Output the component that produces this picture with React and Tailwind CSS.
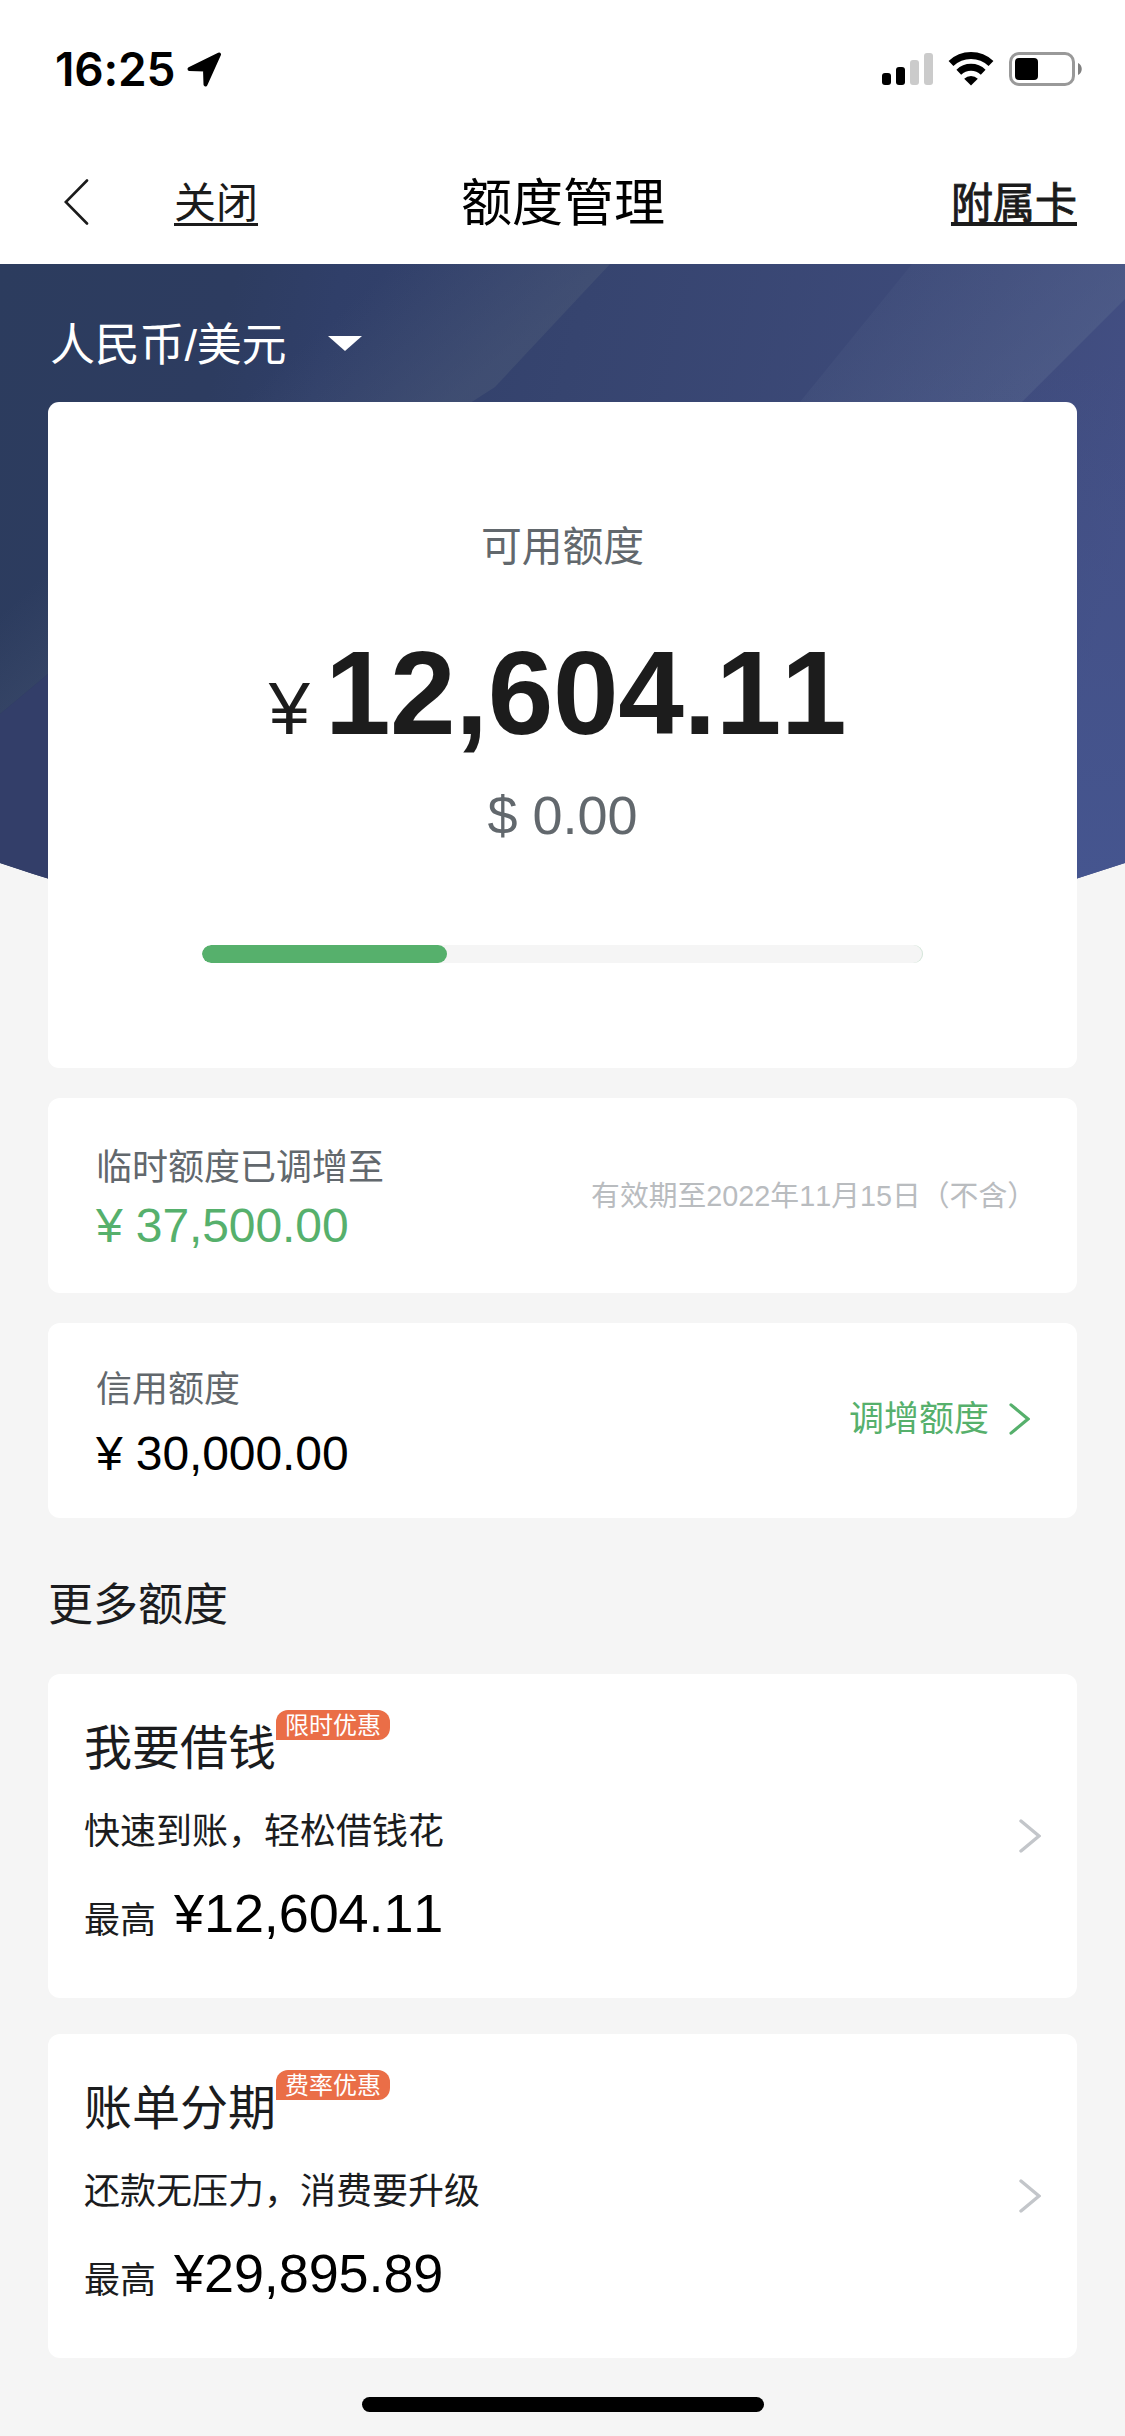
const OFFERS = [
  {
    title: '我要借钱',
    badge: '限时优惠',
    desc: '快速到账，轻松借钱花',
    amount: '¥12,604.11',
  },
  {
    title: '账单分期',
    badge: '费率优惠',
    desc: '还款无压力，消费要升级',
    amount: '¥29,895.89',
  },
]

const USED_PERCENT = 34

function Chevron({ className }) {
  return (
    <svg className={className} viewBox="0 0 22 34" fill="none" stroke="currentColor" strokeWidth="3.4" strokeLinecap="round">
      <path d="M2 2 L20 17 L2 32" />
    </svg>
  )
}

function StatusBar() {
  return (
    <div className="flex h-[140px] items-start justify-between pl-[55px] pr-[43px] pt-[46px]">
      <div className="flex items-center">
        <span className="w-[120px] whitespace-nowrap font-[Inter,sans-serif] text-[46px] font-semibold leading-[46px] tracking-[-0.2px] text-black">16:25</span>
        <svg className="ml-[12px] h-[35px] w-[35px]" viewBox="0 0 35 35">
          <path
            d="M2.5 17 L32 2.5 L18.5 32.5 L18 17.5 Z"
            fill="#000"
            stroke="#000"
            strokeWidth="4"
            strokeLinejoin="round"
          />
        </svg>
      </div>
      <div className="flex h-[46px] items-center">
        {/* Signal */}
        <div className="flex h-[32px] items-end gap-[5px]">
          <span className="h-[12px] w-[9px] rounded-[3px] bg-black" />
          <span className="h-[18px] w-[9px] rounded-[3px] bg-black" />
          <span className="h-[25px] w-[9px] rounded-[3px] bg-[#cbcbcb]" />
          <span className="h-[32px] w-[9px] rounded-[3px] bg-[#cbcbcb]" />
        </div>
        {/* Wi-Fi */}
        <svg className="ml-[15px] h-[34px] w-[46px]" viewBox="0 0 46 34">
          <path d="M3 11.5 A29 29 0 0 1 43 11.5" fill="none" stroke="#000" strokeWidth="7" />
          <path d="M10.8 20.2 A17.5 17.5 0 0 1 35.2 20.2" fill="none" stroke="#000" strokeWidth="6.8" />
          <path d="M16.2 26.8 A9.8 9.8 0 0 1 29.8 26.8 L23 33.6 Z" fill="#000" />
        </svg>
        {/* Battery */}
        <svg className="ml-[15px] h-[34px] w-[73px]" viewBox="0 0 73 34">
          <rect x="1.5" y="1.5" width="63" height="31" rx="8.5" fill="none" stroke="#999" strokeWidth="3" />
          <rect x="6" y="6" width="23" height="22" rx="4" fill="#000" />
          <path d="M69 11 C74 13 74 21 69 23 Z" fill="#808080" />
        </svg>
      </div>
    </div>
  )
}

function NavBar() {
  return (
    <div className="grid h-[124px] grid-cols-3 items-center pl-16 pr-12 pt-[3px] text-[#1b1b1b]">
      <div className="flex items-center">
        <svg className="-mt-1 h-[46px] w-[25px]" viewBox="0 0 25 46" fill="none" stroke="#1b1b1b" strokeWidth="2.6" strokeLinecap="round">
          <path d="M23 1.5 L1.8 23 L23 44.5" />
        </svg>
        <span className="ml-[85px] text-[42px] leading-[60px] underline decoration-[3px] underline-offset-[5px] [text-decoration-skip-ink:none]">关闭</span>
      </div>
      <h1 className="-ml-[15px] text-center text-[51px] leading-[60px] text-black">额度管理</h1>
      <span className="text-right text-[42px] leading-[60px] underline decoration-[4px] underline-offset-[4px] [-webkit-text-stroke:0.9px_#1b1b1b] [text-decoration-skip-ink:none]">
        附属卡
      </span>
    </div>
  )
}

function HeroBackground() {
  return (
    <svg className="absolute left-0 top-0 h-[700px] w-full" viewBox="0 0 1125 700" preserveAspectRatio="none">
      <defs>
        <linearGradient id="base" gradientUnits="userSpaceOnUse" x1="0" y1="0" x2="1125" y2="260">
          <stop offset="0" stopColor="#2c3c5e" />
          <stop offset="0.2" stopColor="#2d3c60" />
          <stop offset="0.29" stopColor="#303f69" />
          <stop offset="0.5" stopColor="#36446f" />
          <stop offset="0.85" stopColor="#3e4b7b" />
          <stop offset="1" stopColor="#434f84" />
        </linearGradient>
        <linearGradient id="bandLeft" gradientUnits="userSpaceOnUse" x1="220" y1="155" x2="315" y2="262">
          <stop offset="0" stopColor="#4d5b78" stopOpacity="0" />
          <stop offset="1" stopColor="#4d5b78" stopOpacity="0.45" />
        </linearGradient>
        <linearGradient id="bandRight" gradientUnits="userSpaceOnUse" x1="850" y1="60" x2="970" y2="185">
          <stop offset="0" stopColor="#56658c" stopOpacity="0.15" />
          <stop offset="1" stopColor="#56658c" stopOpacity="0.5" />
        </linearGradient>
        <linearGradient id="rightEdge" x1="0" y1="0" x2="0" y2="1">
          <stop offset="0" stopColor="#45558f" stopOpacity="0" />
          <stop offset="1" stopColor="#45558f" />
        </linearGradient>
        <clipPath id="curve">
          <path d="M0 0 H1125 V599 Q562 790 0 599 Z" />
        </clipPath>
      </defs>
      <g clipPath="url(#curve)">
        <rect width="1125" height="700" fill="url(#base)" />
        <path d="M0 0 H610 L495 123 L48 410 L0 450 Z" fill="url(#bandLeft)" />
        <path d="M0 450 L48 410 L200 310 V700 H0 Z" fill="#333e69" />
        <path d="M912 0 H1125 V35 L1022 138 L900 260 L700 260 L800 138 Z" fill="url(#bandRight)" />
        <rect x="900" y="100" width="225" height="520" fill="url(#rightEdge)" />
      </g>
    </svg>
  )
}

function AvailableCard() {
  return (
    <section className="flex h-[666px] flex-col items-center rounded-[11px] bg-white">
      <p className="mt-[115px] text-[40.8px] leading-[60px] text-[#62686d]">可用额度</p>
      <p className="mr-[10px] mt-[56px] flex items-baseline whitespace-nowrap text-[#1c1c1c]">
        <span className="mr-[15px] text-[74px] leading-none">¥</span>
        <span className="text-[118px] font-bold leading-[120px] tracking-[-0.4px] [font-kerning:none]">12,604.11</span>
      </p>
      <p className="mt-[32px] text-[54px] leading-[60px] text-[#62686d]">$ 0.00</p>
      <div className="mt-[100px] h-[18px] w-[721px] overflow-hidden rounded-full bg-[#f5f5f5] shadow-[inset_-1px_0_0_#d5e6da]">
        <div className="h-full rounded-full bg-[#56b06c]" style={{ width: `${USED_PERCENT}%` }} />
      </div>
    </section>
  )
}

function OfferCard({ title, badge, desc, amount }) {
  return (
    <section className="flex h-[324px] items-center justify-between rounded-[12px] bg-white pl-9 pr-[36px]">
      <div className="flex h-full flex-col pt-[45px] text-[#1b1c1e]">
        <div className="flex items-start">
          <h3 className="text-[48px] leading-[60px]">{title}</h3>
          <span className="-mt-[9px] flex h-[30px] w-[114px] items-center justify-center rounded-[12px] rounded-bl-none bg-[#ea6e47] pt-[2px] text-[24px] leading-[28px] text-white">
            {badge}
          </span>
        </div>
        <p className="mt-[28px] text-[36px] leading-[50px]">{desc}</p>
        <p className="mt-[26px] flex items-baseline">
          <span className="relative top-px text-[36px] leading-[50px]">最高</span>
          <span className="ml-[18px] text-[54px] leading-[60px] tracking-[-0.1px] text-black [font-kerning:none]">{amount}</span>
        </p>
      </div>
      <Chevron className="h-[34px] w-[22px] text-[#c3c6ca]" />
    </section>
  )
}

export default function App() {
  return (
    <div className="flex h-[2436px] w-[1125px] flex-col overflow-hidden bg-[#f5f5f5] font-['Liberation_Sans','Noto_Sans_CJK_SC',sans-serif]">
      <header className="bg-white">
        <StatusBar />
        <NavBar />
      </header>

      <main className="relative px-12">
        <HeroBackground />

        <div className="relative">
          <div className="flex h-[138px] items-center pl-[2px] pt-[26px] text-white">
            <span className="text-[45px] leading-[60px] tracking-[-0.2px]">人民币/美元</span>
            <svg className="-mt-[6px] ml-[42px] h-[15px] w-[34px]" viewBox="0 0 34 15">
              <path d="M0 0 H34 L17 15 Z" fill="currentColor" />
            </svg>
          </div>

          <AvailableCard />

          {/* Temporary limit */}
          <section className="mt-[30px] flex h-[195px] items-center justify-between rounded-[12px] bg-white pl-12 pr-[41px]">
            <div className="h-full pt-[45px]">
              <p className="text-[36px] leading-[50px] text-[#62686d]">临时额度已调增至</p>
              <p className="mt-[3px] text-[48px] leading-[60px] tracking-[-0.1px] text-[#56b06c]">¥ 37,500.00</p>
            </div>
            <p className="text-[28.8px] leading-[40px] text-[#b9bcbf] [font-kerning:none]">有效期至2022年11月15日（不含）</p>
          </section>

          {/* Credit limit */}
          <section className="mt-[30px] flex h-[195px] items-center justify-between rounded-[12px] bg-white pl-12 pr-[47px]">
            <div className="h-full pt-[42px]">
              <p className="text-[36px] leading-[50px] text-[#62686d]">信用额度</p>
              <p className="mt-[9px] text-[48px] leading-[60px] tracking-[-0.1px] text-black">¥ 30,000.00</p>
            </div>
            <div className="-mt-[3px] flex items-center text-[#56b06c]">
              <span className="text-[35px] leading-[50px]">调增额度</span>
              <Chevron className="ml-[20px] h-[32px] w-[21px]" />
            </div>
          </section>

          <h2 className="flex h-[156px] items-center pt-5 text-[45px] leading-[60px] text-[#1b1c1e]">更多额度</h2>

          <div className="flex flex-col gap-9">
            {OFFERS.map(offer => (
              <OfferCard key={offer.title} {...offer} />
            ))}
          </div>
        </div>
      </main>

      <div className="mx-auto mt-[39px] h-[15px] w-[402px] rounded-full bg-black" />
    </div>
  )
}
